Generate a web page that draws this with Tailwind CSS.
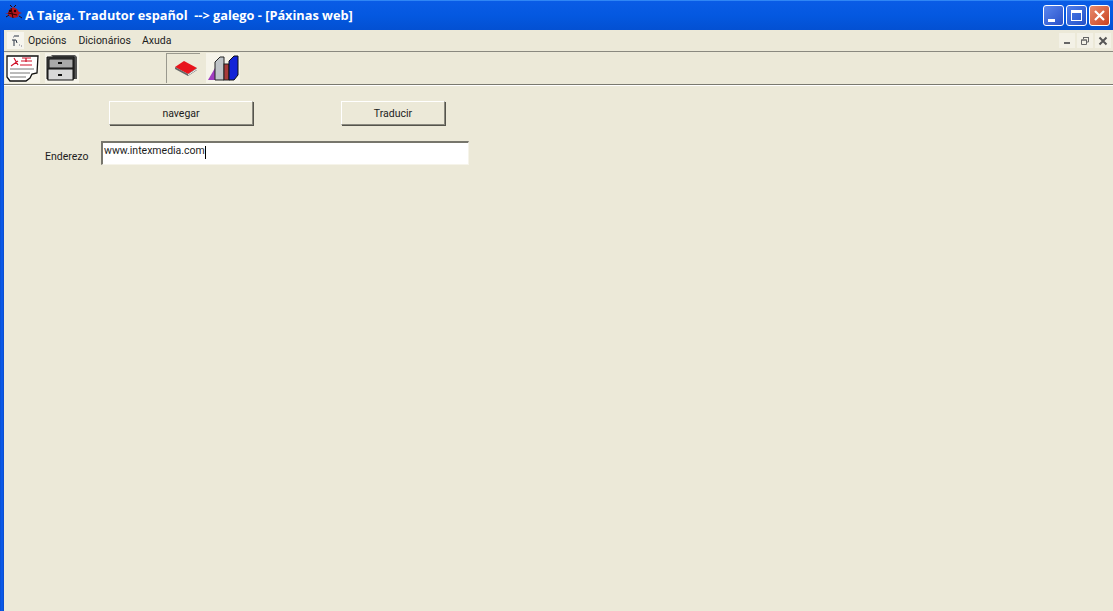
<!DOCTYPE html>
<html><head><meta charset="utf-8"><script src="https://cdn.jsdelivr.net/npm/@tailwindcss/browser@4"></script></head>
<body class="m-0 overflow-hidden">
<div class="w-[1113px] h-[611px] flex flex-col bg-[#ece9d8] overflow-hidden font-['Roboto','Liberation_Sans',sans-serif] text-[10.500px] text-[#1c1c1c]">
  <!-- title bar -->
  <div class="h-[30px] shrink-0 flex items-center bg-gradient-to-b from-[#0a5ce6] via-[#0458e0] to-[#0350d2] border-t border-[#2f86f5] pl-[4px] pr-[3px]">
    <svg width="19" height="16" viewBox="0 0 19 16" class="mt-[-5px]"><path d="M1 9l3-1 1-3 4-3 4 2 2 3 3 1-3 1-1 3-4 1-4-1-2-3z" fill="#b4141c"/><path d="M7 3l2 10M4 8l9 2M2 12l3-2M15 11l3 2" stroke="#2a0606" stroke-width="1"/><circle cx="6" cy="6" r="1.200" fill="#200"/><circle cx="11" cy="6" r="1.200" fill="#200"/><path d="M8 2L6 0M10 2l2-2" stroke="#300"/></svg>
    <span class="ml-[2px] text-white font-bold text-[12.750px] whitespace-pre font-['Open_Sans','Liberation_Sans',sans-serif]">A Taiga. Tradutor español  --&gt; galego - [Páxinas web]</span>
    <div class="ml-auto flex gap-[2px]">
      <div class="w-[21px] h-[21px] rounded-[3px] border border-white bg-gradient-to-br from-[#5a86ee] to-[#2a50c8] flex items-end pl-[4px] pb-[3px]"><div class="w-[7px] h-[3px] bg-white"></div></div>
      <div class="w-[21px] h-[21px] rounded-[3px] border border-white bg-gradient-to-br from-[#4f7eea] to-[#2350c8] p-[4px]"><div class="w-full h-full border border-white border-t-[3px]"></div></div>
      <div class="w-[21px] h-[21px] rounded-[3px] border border-white bg-gradient-to-br from-[#e88a6c] to-[#c8401c] flex items-center justify-center"><svg width="13" height="13" viewBox="0 0 13 13"><path d="M2 2l9 9M11 2l-9 9" stroke="#fff" stroke-width="2.2"/></svg></div>
    </div>
  </div>
  <div class="flex-1 flex min-h-0">
    <div class="w-[4px] shrink-0 bg-gradient-to-r from-[#0a4fd0] via-[#0a5cf0] to-[#0a4ac8]"></div>
    <div class="flex-1 flex flex-col min-w-0">
      <!-- menu -->
      <div class="h-[22px] shrink-0 flex items-center border-b border-[#8a897f] pl-[3px] pr-[2px]">
        <div class="w-[17px] h-[17px] bg-[#f6f5ee] flex items-center justify-center"><svg width="14" height="14" viewBox="0 0 14 14"><path d="M5 2h5M3 6h4l1 3M5 6v6" stroke="#2a3444" fill="none"/><path d="M10 11h1M12 12h1M4 3h1" stroke="#778"/></svg></div>
        <span class="ml-[4px]">Opcións</span><span class="ml-[12px]">Dicionários</span><span class="ml-[11px]">Axuda</span>
        <div class="ml-auto flex gap-[2px] items-center">
          <div class="w-[16px] h-[15px] bg-[#f3f1e6] flex items-center justify-center"><div class="w-[6px] h-[2px] bg-[#666] mt-[5px]"></div></div>
          <div class="w-[16px] h-[15px] bg-[#f3f1e6] flex items-center justify-center"><svg width="10" height="10" viewBox="0 0 10 10"><path d="M3.500 3V1.500h5v4.500H7M1.500 4h5v4.500h-5z" fill="none" stroke="#666"/><path d="M3 1.500h6M1 4h6" stroke="#666"/></svg></div>
          <div class="w-[16px] h-[15px] bg-[#f3f1e6] flex items-center justify-center"><svg width="10" height="10" viewBox="0 0 10 10"><path d="M1.500 1.500l7 7M8.500 1.500l-7 7" stroke="#555" stroke-width="2"/></svg></div>
        </div>
      </div>
      <!-- toolbar -->
      <div class="h-[33px] shrink-0 flex items-center border-b border-[#7a796f] pl-[1px] shadow-[0_1px_0_#fff]">
        <div class="w-[35px] h-[30px] bg-[#f6f4ea] flex items-center justify-center">
          <svg width="33" height="27" viewBox="0 0 33 27"><path d="M1 1h31l-1 17-5 1-2 4-4 3H4L1 22z" fill="#fff" stroke="#111" stroke-width="1.300"/><path d="M5 11l7-5M8 3l4 7M16 3h9M20 3v4M15 6h11M14 10h12" stroke="#d01028" stroke-width="1.200" fill="none"/><path d="M4 14h24M4 18h20M4 22h16" stroke="#777"/></svg>
        </div>
        <div class="ml-[5px] w-[34px] h-[30px] bg-[#f6f4ea] flex items-center justify-center">
          <svg width="32" height="28" viewBox="0 0 32 28"><path d="M5 1h24l2 2v22h-3z" fill="#555"/><path d="M1 3h27v22H1z" fill="#444" stroke="#111"/><rect x="3" y="5" width="24" height="9" fill="#aaa" stroke="#111"/><rect x="2" y="15" width="25" height="11" fill="#d8d8d8" stroke="#111"/><rect x="12" y="8" width="4" height="2" fill="#111"/><rect x="12" y="20" width="4" height="2" fill="#111"/></svg>
        </div>
        <div class="ml-[87px] w-[34px] h-[30px] border-t border-l border-[#9a998e] bg-[#ece9d8] flex items-center justify-center">
          <svg width="24" height="17" viewBox="0 0 24 17" class="ml-[5px]"><path d="M1 7l9-6 13 7-9 6z" fill="#e8141c"/><path d="M1 7v2l13 7 9-6V8l-9 6z" fill="#666"/><path d="M14 15l9-6" stroke="#fff"/></svg>
        </div>
        <div class="ml-[6px] w-[34px] h-[30px] bg-[#f6f4ea] flex items-center justify-center">
          <svg width="32" height="26" viewBox="0 0 32 26"><path d="M1 25l7-12v12z" fill="#a03cc0"/><path d="M8 25V7l5-5h4v23z" fill="#bfc4c8" stroke="#222"/><rect x="17" y="9" width="5" height="16" fill="#a83a3a" stroke="#222"/><path d="M22 25V6l5-5h4v19l-4 5z" fill="#1424d8" stroke="#111"/></svg>
        </div>
      </div>
      <!-- body -->
      <div class="flex-1 pt-[16px]">
        <div class="flex items-start">
          <button class="ml-[105px] w-[144px] h-[24px] border border-t-[#fff] border-l-[#fff] border-r-[#8a897f] border-b-[#8a897f] shadow-[1px_1px_0_#55544c] text-center pt-[1px]">navegar</button>
          <button class="ml-[88px] w-[104px] h-[24px] border border-t-[#fff] border-l-[#fff] border-r-[#8a897f] border-b-[#8a897f] shadow-[1px_1px_0_#55544c] text-center pt-[1px]">Traducir</button>
        </div>
        <div class="flex items-center mt-[16px]">
          <span class="ml-[41px] w-[56px] mt-[7px]">Enderezo</span>
          <div class="w-[368px] h-[24px] bg-white border-t-2 border-l-2 border-[#77766c] border-r border-b border-r-[#f6f4ea] border-b-[#f6f4ea] flex items-center pl-[1px] text-[10.500px] leading-none pb-[2px]"><span class="border-r border-black h-[13px]">www.intexmedia.com</span></div>
        </div>
      </div>
    </div>
  </div>
</div>
</body></html>
